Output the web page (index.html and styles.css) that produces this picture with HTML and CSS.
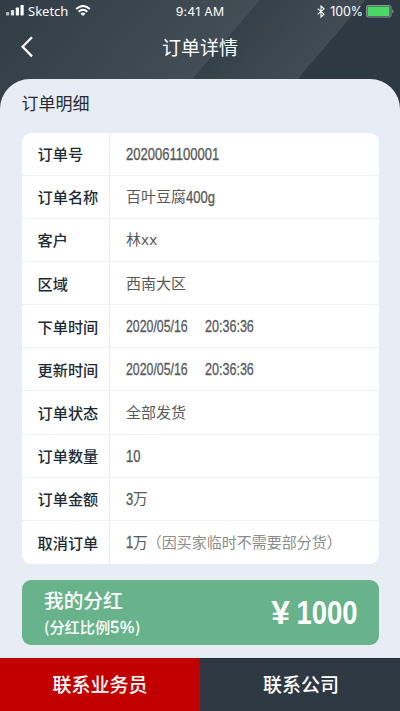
FILE: index.html
```html
<!DOCTYPE html>
<html lang="zh-CN">
<head>
<meta charset="utf-8">
<meta name="viewport" content="width=device-width, initial-scale=1">
<title>订单详情</title>
<link rel="stylesheet" href="styles.css">
</head>
<body>
<div class="app">
  <header class="header">
    <div class="status">
      <div class="status-left">
        <svg class="signal" width="18" height="12" viewBox="0 0 18 12"><g fill="#fff"><rect x="0" y="7" width="3.2" height="3.5" rx=".7" opacity=".65"/><rect x="4.9" y="5" width="3.2" height="5.5" rx=".7" opacity=".85"/><rect x="9.8" y="2.5" width="3.2" height="8" rx=".7"/><rect x="14.5" y="0" width="3.2" height="10.5" rx=".7"/></g></svg>
        <span class="carrier">Sketch</span>
        <svg class="wifi" width="16" height="12" viewBox="0 0 16 12"><path d="M1.2 4Q8-2 14.8 4M3.7 6.7Q8 2.9 12.3 6.7" fill="none" stroke="#fff" stroke-width="2"/><path d="M5.5 8.4Q8 6.5 10.5 8.4L8 11Z" fill="#fff"/></svg>
      </div>
      <span class="time">9:41 AM</span>
      <div class="status-right">
        <svg class="bluetooth" width="8" height="13" viewBox="0 0 8 13"><path d="M.7 3.6 7 9.2 4 12V1L7 3.8.7 9.4" fill="none" stroke="#fff" stroke-width="1.1"/></svg>
        <span class="percent">100%</span>
        <svg class="battery" width="28" height="13" viewBox="0 0 28 13"><rect x=".5" y=".5" width="24.5" height="11.5" rx="1.5" fill="none" stroke="#8d969b"/><rect x="1.5" y="1.5" width="22" height="9.5" fill="#4bd763"/><path d="M26.3 4.2q1.2.7 1.2 2t-1.2 2z" fill="#8d969b"/></svg>
      </div>
    </div>
    <div class="nav">
      <svg class="back" width="14" height="22" viewBox="0 0 14 22"><path d="M12 1.2 2.6 10.8l9.4 9.6" fill="none" stroke="#fff" stroke-width="2.3"/></svg>
      <h1 class="title">订单详情</h1>
    </div>
  </header>
  <main class="sheet">
    <h2 class="section-title">订单明细</h2>
    <dl class="details">
      <div class="row"><dt>订单号</dt><dd><span class="num">2020061100001</span></dd></div>
      <div class="row"><dt>订单名称</dt><dd>百叶豆腐<span class="num">400g</span></dd></div>
      <div class="row"><dt>客户</dt><dd>林<span class="latin">xx</span></dd></div>
      <div class="row"><dt>区域</dt><dd>西南大区</dd></div>
      <div class="row"><dt>下单时间</dt><dd><span class="num date">2020/05/16</span><span class="num clock">20:36:36</span></dd></div>
      <div class="row"><dt>更新时间</dt><dd><span class="num date">2020/05/16</span><span class="num clock">20:36:36</span></dd></div>
      <div class="row"><dt>订单状态</dt><dd>全部发货</dd></div>
      <div class="row"><dt>订单数量</dt><dd><span class="num">10</span></dd></div>
      <div class="row"><dt>订单金额</dt><dd><span class="num digit">3</span>万</dd></div>
      <div class="row"><dt>取消订单</dt><dd><span class="num digit">1</span>万<span class="note">（因买家临时不需要部分货）</span></dd></div>
    </dl>
    <section class="bonus">
      <div>
        <p class="bonus-title">我的分红</p>
        <p class="bonus-rate">(分红比例<span class="rate-num">5%</span>)</p>
      </div>
      <p class="amount"><span class="yen">¥</span><span class="sum">1000</span></p>
    </section>
  </main>
  <footer class="actions">
    <button class="action sales">联系业务员</button>
    <button class="action company">联系公司</button>
  </footer>
</div>
</body>
</html>
```

FILE: styles.css
```css
* { box-sizing: border-box; margin: 0; padding: 0; }
body { font-family: "Liberation Sans", "Noto Sans CJK SC", sans-serif; color: #252b30; }
.app {
  width: 400px; height: 711px; overflow: hidden;
  display: flex; flex-direction: column;
  background: linear-gradient(130.6deg, #313c45 0, #434d56 197px, #35414a 197.7px, #414b54 277px, #2e3a43 277.7px) 0 0 / 400px 120px no-repeat, #e8ecf4;
}
.header { height: 79px; color: #fff; }
.status {
  height: 23px; padding: 0 6px 0 6px;
  display: grid; grid-template-columns: 1fr auto 1fr; align-items: center;
  font: 13px/23px Inter, sans-serif;
}
.status-left, .status-right { display: flex; align-items: center; }
.status-right { justify-content: flex-end; }
.status svg { flex: none; margin-top: -1px; }
.carrier { margin: 0 7px 0 4px; font: 13px/23px "Noto Sans", sans-serif; }
.time { font-size: 12.3px; letter-spacing: .25px; margin-top: -1px; }
.percent { margin: 0 3px 0 5px; font-size: 12.4px; }
.nav { height: 48px; display: grid; grid-template-columns: 40px 1fr 40px; align-items: center; }
.back { margin-left: 20px; }
.title { font: 400 19px/28px "Noto Sans CJK SC", sans-serif; text-align: center; }
.sheet { flex: 1; padding: 10px 21.5px 0; border-radius: 30px 30px 0 0; background: #e8ecf4; }
.section-title { height: 43.5px; font: 400 17px/27px "Noto Sans CJK SC", sans-serif; }
.details { height: 431.5px; display: grid; grid-template-rows: repeat(10, 1fr); background: #fff; border-radius: 9px; overflow: hidden; font: 15px/24px "Noto Sans CJK SC", sans-serif; }
.row { display: grid; grid-template-columns: 88px 1fr; border-bottom: 1px solid #f0f2f4; }
.row:last-child { border-bottom: 0; }
dt, dd { display: flex; align-items: center; white-space: nowrap; padding-bottom: 1px; }
dt { padding-left: 16px; border-right: 1px solid #e9ecef; color: #1e2a34; font-weight: 500; font-size: 15.2px; }
dd { padding-left: 16.5px; color: #58595b; }
.num { display: inline-block; font-family: "Liberation Sans", sans-serif; font-size: 15.7px; transform: scaleX(.83); transform-origin: left center; margin-top: 3px; -webkit-text-stroke: .3px currentColor; }
.date { width: 95.5px; margin-right: -17px; transform: scaleX(.785); }
.clock { transform: scaleX(.8); }
.digit { width: 6.8px; }
.latin { font-family: "Noto Sans", sans-serif; letter-spacing: .3px; }
.note { color: #8d8d8d; margin-left: -1px; }
.bonus { height: 64.5px; margin-top: 16px; padding: 0 21px 0 22.5px; display: flex; justify-content: space-between; align-items: center; background: #68b38b; border-radius: 9px; color: #fff; font-family: "Noto Sans CJK SC", sans-serif; }
.bonus-title { font-size: 19.7px; line-height: 29px; font-weight: 500; }
.bonus-rate { font-size: 15.2px; line-height: 24px; font-weight: 500; }
.rate-num { font-family: "Liberation Sans", sans-serif; font-size: 16px; letter-spacing: .9px; -webkit-text-stroke: .3px currentColor; }
.amount { display: flex; padding-top: 2px; font: 700 33.5px/40px "Liberation Sans", sans-serif; }
.yen, .sum { display: inline-block; transform: scaleX(.82); transform-origin: right center; }
.yen { transform: none; margin-right: -7px; }
.actions { height: 53.5px; display: grid; grid-template-columns: 1fr 1fr; }
.action { border: 0; color: #fff; font: 500 19px/28px "Noto Sans CJK SC", sans-serif; }
.sales { background: #c20000; }
.company { padding: 0 0 1px 2px; background: #2e3943; border-top: 1px solid #1f2a33; }
```
